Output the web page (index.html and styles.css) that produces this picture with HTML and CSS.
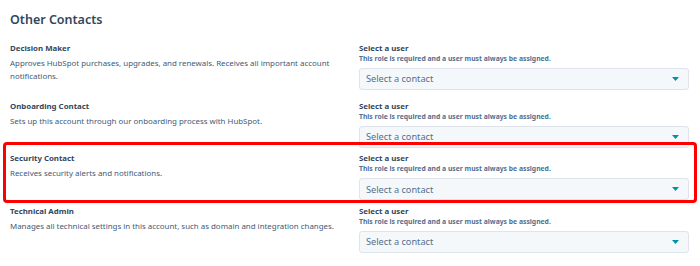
FILE: index.html
```html
<!DOCTYPE html>
<html>
<head>
    <title>Other Contacts</title>
    <link rel="stylesheet" href="styles.css">
</head>
<body>
    <main class="page">
        <h2 class="section-title">Other Contacts</h2>

        <div class="role-list">
            <div class="role-row">
                <div class="role-info">
                    <div class="role-name">Decision Maker</div>
                    <p class="role-desc">Approves HubSpot purchases, upgrades, and renewals. Receives all important account notifications.</p>
                </div>
                <div class="role-field">
                    <div class="field-label">Select a user</div>
                    <div class="field-help">This role is required and a user must always be assigned.</div>
                    <div class="select">
                        <span class="select-value">Select a contact</span>
                        <svg class="caret" width="7" height="4" viewBox="0 0 7 4"><path d="M0 0h7L3.5 4z"/></svg>
                    </div>
                </div>
            </div>

            <div class="role-row">
                <div class="role-info">
                    <div class="role-name">Onboarding Contact</div>
                    <p class="role-desc">Sets up this account through our onboarding process with HubSpot.</p>
                </div>
                <div class="role-field">
                    <div class="field-label">Select a user</div>
                    <div class="field-help">This role is required and a user must always be assigned.</div>
                    <div class="select">
                        <span class="select-value">Select a contact</span>
                        <svg class="caret" width="7" height="4" viewBox="0 0 7 4"><path d="M0 0h7L3.5 4z"/></svg>
                    </div>
                </div>
            </div>

            <div class="role-row">
                <div class="highlight"></div>
                <div class="role-info">
                    <div class="role-name">Security Contact</div>
                    <p class="role-desc">Receives security alerts and notifications.</p>
                </div>
                <div class="role-field">
                    <div class="field-label">Select a user</div>
                    <div class="field-help">This role is required and a user must always be assigned.</div>
                    <div class="select">
                        <span class="select-value">Select a contact</span>
                        <svg class="caret" width="7" height="4" viewBox="0 0 7 4"><path d="M0 0h7L3.5 4z"/></svg>
                    </div>
                </div>
            </div>

            <div class="role-row">
                <div class="role-info">
                    <div class="role-name">Technical Admin</div>
                    <p class="role-desc">Manages all technical settings in this account, such as domain and integration changes.</p>
                </div>
                <div class="role-field">
                    <div class="field-label">Select a user</div>
                    <div class="field-help">This role is required and a user must always be assigned.</div>
                    <div class="select">
                        <span class="select-value">Select a contact</span>
                        <svg class="caret" width="7" height="4" viewBox="0 0 7 4"><path d="M0 0h7L3.5 4z"/></svg>
                    </div>
                </div>
            </div>
        </div>
    </main>
</body>
</html>
```

FILE: styles.css
```css
body {
    margin: 0;
    font-family: "Noto Sans", sans-serif;
    color: #33475b;
    background: #fff;
}
.page {
    padding: 0 11px 0 10px;
}
.section-title {
    margin: 11.5px 0 14px;
    font-size: 12.5px;
    line-height: 16px;
    font-weight: 600;
}
.role-row {
    position: relative;
    display: grid;
    grid-template-columns: 1fr 330px;
    column-gap: 10px;
    align-items: start;
}
.role-info {
    padding-bottom: 16px;
}
.role-name,
.field-label {
    font-size: 7.85px;
    line-height: 12px;
    font-weight: 700;
}
.role-desc {
    margin: 3px 0 0;
    font-size: 7.9px;
    line-height: 13.5px;
    color: #425b76;
}
.field-help {
    font-size: 6.8px;
    line-height: 10px;
    font-weight: 700;
    color: #516f90;
}
.role-field {
    padding-bottom: 4.5px;
}
.select {
    box-sizing: border-box;
    height: 22px;
    margin-top: 4px;
    padding: 0 9px 0 6px;
    display: flex;
    align-items: center;
    justify-content: space-between;
    background: #f5f8fa;
    border: 1px solid #dfe3eb;
    border-radius: 3px;
}
.select-value {
    font-size: 9.2px;
    color: #516f90;
}
.caret {
    fill: #0091ae;
}
.highlight {
    position: absolute;
    left: -7px;
    right: -8px;
    top: -10px;
    height: 61px;
    box-sizing: border-box;
    border: 3px solid #f00;
    border-radius: 4px;
    pointer-events: none;
}
```
